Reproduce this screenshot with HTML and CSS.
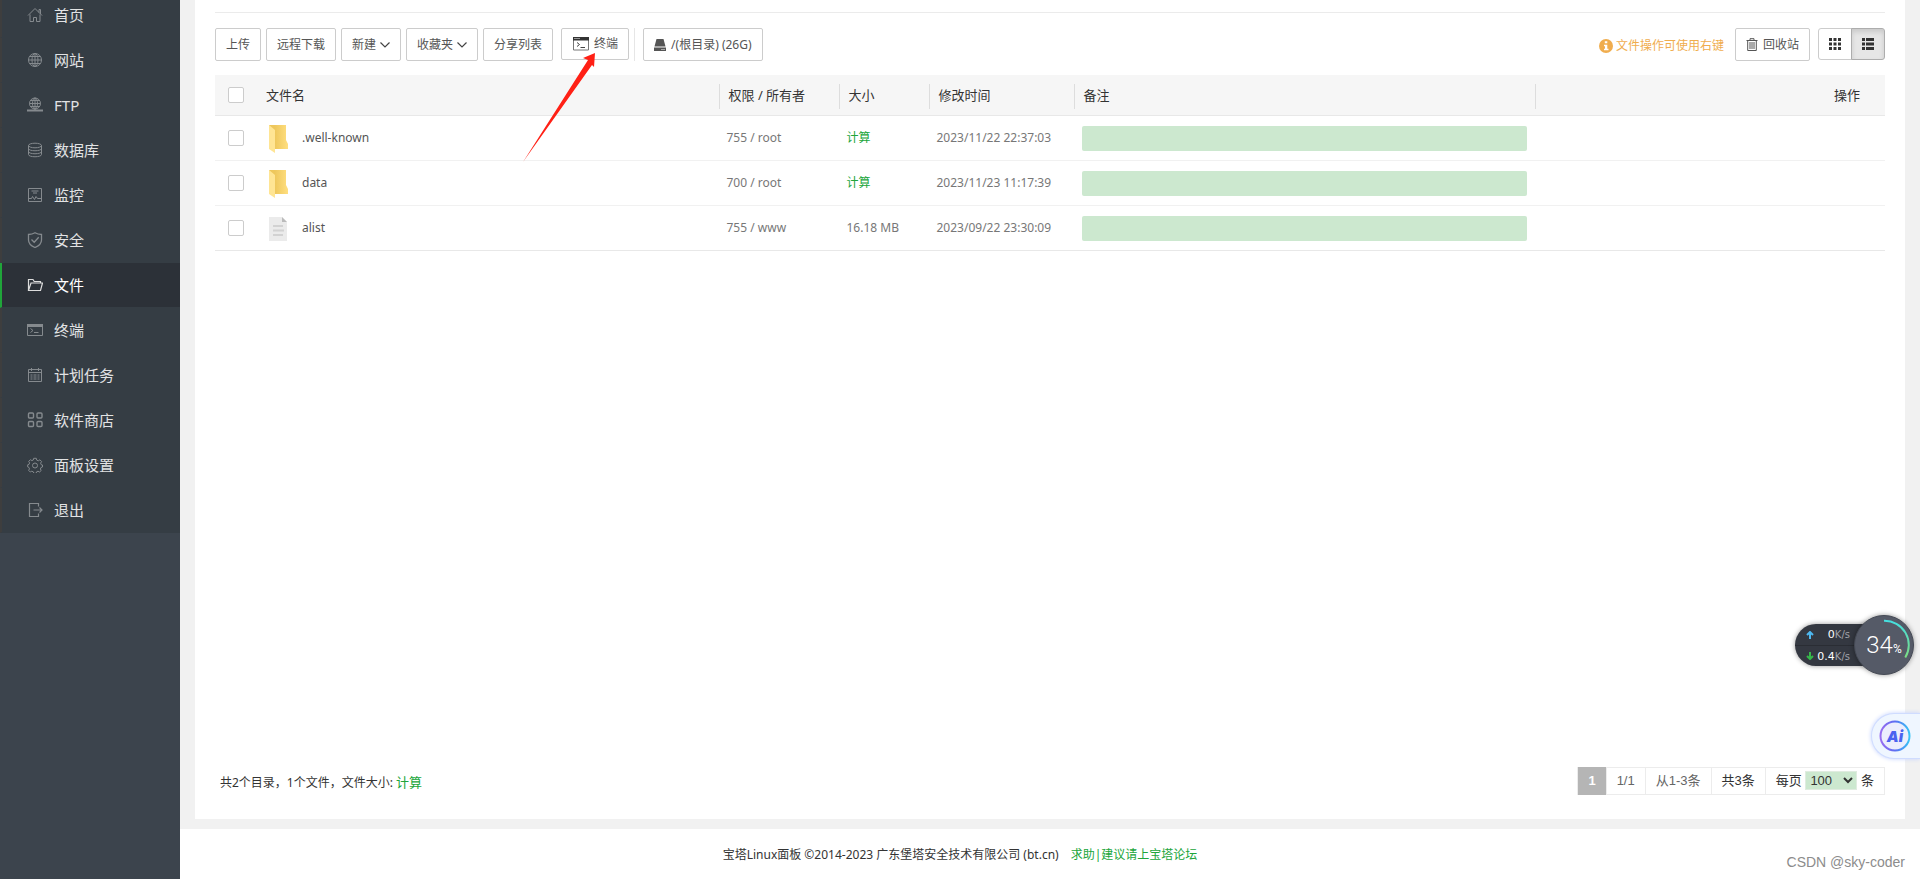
FILE: index.html
```html
<!DOCTYPE html>
<html lang="zh-CN">
<head>
<meta charset="utf-8">
<title>文件 - 宝塔Linux面板</title>
<link rel="stylesheet" href="styles.css">
</head>
<body>
<div class="page">
  <nav class="sidebar">
    <ul class="menu">
      <li><a href="#"><svg viewBox="0 0 16 16"><path d="M1 8.5 8 1.5l7 7M12 5.500V2.500h1.500v4.500M3 7.500v7h3.500v-4h3v4H13v-7"/></svg>首页</a></li>
      <li><a href="#"><svg viewBox="0 0 16 16"><circle cx="8" cy="8" r="6.500"/><ellipse cx="8" cy="8" rx="3" ry="6.500"/><path d="M8 1.500v13M1.500 8h13M2.500 4.500h11M2.500 11.500h11"/></svg>网站</a></li>
      <li><a href="#"><svg viewBox="0 0 16 16"><circle cx="8" cy="6.500" r="5.500"/><ellipse cx="8" cy="6.500" rx="2.500" ry="5.500"/><path d="M8 1v12M2.500 6.500h11M3.500 3.500h9M3.500 9.500h9"/><path d="M0 13.500h16M6 13.500h4" stroke-width="2"/></svg>FTP</a></li>
      <li><a href="#"><svg viewBox="0 0 16 16"><ellipse cx="8" cy="3.500" rx="6.500" ry="2.300"/><path d="M1.500 3.500v9c0 3 13 3 13 0v-9M1.500 6.500c0 3 13 3 13 0M1.500 9.500c0 3 13 3 13 0"/></svg>数据库</a></li>
      <li><a href="#"><svg viewBox="0 0 16 16"><path d="M1.500 1.500h13v13h-13zM4.500 4h7M6 6h4M1.500 11.500h3l1-2 2 3 1.500-3 1.500 2h4"/></svg>监控</a></li>
      <li><a href="#"><svg viewBox="0 0 16 16"><path d="M8 .8c2 1.200 4 1.700 6.500 1.700v5.500c0 3.500-2.500 5.800-6.500 7.500-4-1.700-6.500-4-6.500-7.500V2.500C4 2.500 6 2 8 .8zM4.500 7.500l2.700 2.700 4.500-5" stroke-width="1.300"/></svg>安全</a></li>
      <li class="active"><a href="#"><svg viewBox="0 0 16 16"><path d="M1.500 13V2.500h4.500l1.200 2h6.300V6M1.500 13.500 4 6h11.500l-2 7.500z" stroke-width="1.200"/></svg>文件</a></li>
      <li><a href="#"><svg viewBox="0 0 16 16"><path d="M.5 2.500h15v11H.5z"/><path d="M0 3.500h16" stroke-width="3"/><path d="m3.500 6.500 2.500 2-2.500 2M7 10.500h4.500"/></svg>终端</a></li>
      <li><a href="#"><svg viewBox="0 0 16 16"><path d="M1.500 2.500h13v12h-13zM1.500 5.500h13M4.500 1v3M11.500 1v3M3.500 8h2m1 0h3m1 0h2M3.500 10h2m1 0h3m1 0h2M3.500 12h2m1 0h3m1 0h2"/></svg>计划任务</a></li>
      <li><a href="#"><svg viewBox="0 0 16 16"><g stroke-width="1.400"><rect x="1.500" y="1" width="5" height="5" rx="1"/><rect x="10" y="1" width="5" height="5" rx="1"/><rect x="1.500" y="9.500" width="5" height="5" rx="1"/><rect x="10" y="9.500" width="5" height="5" rx="1"/></g></svg>软件商店</a></li>
      <li><a href="#"><svg viewBox="0 0 16 16"><path d="M6.700 1.300h2.600l.4 1.800 1.600.7 1.600-1 1.700 1.800-1 1.500.7 1.700 1.200.2v2l-1.500.5-.6 1.500.8 1.500-1.700 1.500-1.500-.8-1.400.6-.5 1.600H6.900l-.6-1.600-1.500-.6-1.500.8-1.700-1.700.9-1.400-.6-1.500-1.200-.5V7.800L2 7.400l.6-1.500-.9-1.500 1.700-1.700 1.500.9 1.400-.6z"/><circle cx="8" cy="8.500" r="2.500"/></svg>面板设置</a></li>
      <li><a href="#"><svg viewBox="0 0 16 16"><path d="M11.500 4.500v-3h-9v13h9v-3M6.500 8h8.500M12.500 5.500 15 8l-2.500 2.500" stroke-width="1.200"/></svg>退出</a></li>
    </ul>
  </nav>

  <div class="main">
    <main class="panel">
      <div class="toolbar">
        <button class="btn">上传</button>
        <button class="btn">远程下载</button>
        <button class="btn">新建<svg class="caret" viewBox="0 0 10 6"><path d="m.5.5 4.500 4.500L9.500.5"/></svg></button>
        <button class="btn">收藏夹<svg class="caret" viewBox="0 0 10 6"><path d="m.5.5 4.500 4.500L9.500.5"/></svg></button>
        <button class="btn">分享列表</button>
        <button class="btn terminal"><svg class="term-icon" viewBox="0 0 16 14"><path d="M.5 1.500h15v11.500H.5z" fill="none" stroke="#777"/><path d="M0 0h16v3.500H0z" fill="#333"/><path d="M1.500 1.500h1m1 0h1m1 0h1" stroke="#fff"/><path d="m4 5.500 2.500 2L4 9.500M7.500 10.500H12" fill="none" stroke="#444"/></svg>终端</button>
        <span class="split"></span>
        <button class="btn disk"><svg class="disk-icon" viewBox="0 0 12 12"><path d="M2.500 0h7l2 7.500h-11zM0 8.500h12V12H0z" fill="#555"/><path d="M7.500 10.500h1m1 0h1" stroke="#fff"/></svg>/(根目录) (26G)</button>
        <span class="hint"><svg class="info-icon" viewBox="0 0 14 14"><circle cx="7" cy="7" r="7" fill="#f0ad4e"/><path d="M5.800 2.300h2.500v2H5.800zM5 5.700h3.300v4H9.500v1.600H5V9.700h1V7.200H5z" fill="#fff"/></svg>文件操作可使用右键</span>
        <button class="btn recycle"><svg class="trash-icon" viewBox="0 0 12 14"><path d="M.5 2.500h11M4 2V.700h4V2M1.700 3v9.500h8.600V3M4 4v7M6 4v7M8 4v7" fill="none" stroke="#555"/></svg>回收站</button>
        <div class="views">
          <button aria-label="图标"><svg viewBox="0 0 12 12"><path d="M0 0h3v3H0zM4.500 0h3v3h-3zM9 0h3v3H9zM0 4.500h3v3H0zM4.500 4.500h3v3h-3zM9 4.500h3v3H9zM0 9h3v3H0zM4.500 9h3v3h-3zM9 9h3v3H9z"/></svg></button>
          <button class="on" aria-label="列表"><svg viewBox="0 0 12 12"><path d="M0 0h3v3H0zM4 0h8v3H4zM0 4.500h3v3H0zM4 4.500h8v3H4zM0 9h3v3H0zM4 9h8v3H4z"/></svg></button>
        </div>
      </div>

      <table class="files">
        <colgroup><col class="c-check"><col><col class="c-perm"><col class="c-size"><col class="c-time"><col><col class="c-act"></colgroup>
        <thead>
          <tr><th><input type="checkbox" aria-label="全选"></th><th>文件名</th><th class="line">权限 / 所有者</th><th class="line">大小</th><th class="line">修改时间</th><th class="line">备注</th><th class="line act">操作</th></tr>
        </thead>
        <tbody>
          <tr><td><input type="checkbox" aria-label="选择 .well-known"></td><td><div class="name"><svg class="folder" viewBox="0 0 20 29"><defs><linearGradient id="fold" x1="0" y1="0" x2="1" y2="0"><stop offset=".3" stop-color="#eec75c"/><stop offset="1" stop-color="#ffdf80"/></linearGradient></defs><path d="M1 1h17v15l2 4v5H6z" fill="url(#fold)"/><path d="M1 1 7 6v23l-6-4z" fill="#ffe594"/></svg>.well-known</div></td><td>755 / root</td><td><a href="#">计算</a></td><td>2023/11/22 22:37:03</td><td><input class="note" type="text" aria-label="备注"></td><td></td></tr>
          <tr><td><input type="checkbox" aria-label="选择 data"></td><td><div class="name"><svg class="folder" viewBox="0 0 20 29"><path d="M1 1h17v15l2 4v5H6z" fill="url(#fold)"/><path d="M1 1 7 6v23l-6-4z" fill="#ffe594"/></svg>data</div></td><td>700 / root</td><td><a href="#">计算</a></td><td>2023/11/23 11:17:39</td><td><input class="note" type="text" aria-label="备注"></td><td></td></tr>
          <tr><td><input type="checkbox" aria-label="选择 alist"></td><td><div class="name"><svg class="folder" viewBox="0 0 20 29"><path d="M1 3h13l5 5v19H1z" fill="#ebebeb"/><path d="M14 3l5 5h-5z" fill="#bbb"/><path d="M5 12h10M5 16.500h11M5 21h10" stroke="#d2d2d2" stroke-width="2"/></svg>alist</div></td><td>755 / www</td><td>16.18 MB</td><td>2023/09/22 23:30:09</td><td><input class="note" type="text" aria-label="备注"></td><td></td></tr>
        </tbody>
      </table>

      <div class="bottom">
        <div class="summary">共2个目录，1个文件，文件大小: <a href="#">计算</a></div>
        <div class="pager">
          <span class="current">1</span>
          <span class="grey">1/1</span>
          <span class="grey">从1-3条</span>
          <span>共3条</span>
          <label>每页 <select><option>100</option></select> 条</label>
        </div>
      </div>
    </main>
    <footer class="footer">
      <span>宝塔Linux面板 ©2014-2023 广东堡塔安全技术有限公司 (bt.cn)</span>
      <a href="#">求助|建议请上宝塔论坛</a>
    </footer>
  </div>
</div>

<svg class="arrow" viewBox="0 0 76 112"><path d="M74 1 62 6l5 2L2 110 71 13l2 2z" fill="#ff2015"/></svg>

<div class="monitor">
  <div class="speeds">
    <div><svg viewBox="0 0 8 8"><path d="M4 8V1M1 4l3-3 3 3" stroke="#4db8f0"/></svg><span>0<small>K/s</small></span></div>
    <div><svg viewBox="0 0 8 8"><path d="M4 0v7M1 4l3 3 3-3" stroke="#36b84a"/></svg><span>0.4<small>K/s</small></span></div>
  </div>
  <div class="gauge">
    <svg viewBox="0 0 60 60"><defs><linearGradient id="ring" x1="0" y1="0" x2="0" y2="1"><stop offset="0" stop-color="#45dfe0"/><stop offset="1" stop-color="#7ddc82"/></linearGradient></defs><path d="M30 5a25 25 0 0 1 22 38" fill="none" stroke="url(#ring)" stroke-width="2"/></svg>
    <span>34<small>%</small></span>
  </div>
</div>
<button class="ai"><svg viewBox="0 0 32 32" aria-hidden="true"><defs><linearGradient id="halo" x1="0" y1="0" x2="1" y2="0"><stop offset="0" stop-color="#9a6df0"/><stop offset=".5" stop-color="#5c6cf2"/><stop offset="1" stop-color="#38c4f5"/></linearGradient></defs><circle cx="16" cy="16" r="14.500" fill="#eceefd" stroke="url(#halo)" stroke-width="2"/></svg><span>Ai</span></button>
<div class="watermark">CSDN @sky-coder</div>
</body>
</html>
```
FILE: styles.css
```css
* { box-sizing: border-box; }
body { margin: 0; background: #f1f1f1; color: #333; font: 12px/18px "Noto Sans", "Noto Sans CJK SC", sans-serif; overflow: hidden; }
a { color: #20a53a; text-decoration: none; }
button, input, select { font: inherit; margin: 0; }

.page { display: flex; min-height: 100vh; }

.sidebar { width: 180px; flex: none; background: #3c444d; }
.menu { list-style: none; margin: -7px 0 0; padding: 0; background: #353d44; }
.menu li { height: 45px; border-left: 2px solid #3e3e3e; border-bottom: 1px solid #353d44; }
.menu a { display: flex; align-items: center; gap: 11px; height: 44px; padding-left: 25px; color: #e2e3e4; font-size: 15px; }
.menu svg { width: 16px; height: 16px; fill: none; stroke: #858a8e; }
.menu .active { background: #2c3138; border-left-color: #20a53a; }
.menu .active a { color: #fff; }
.menu .active svg { stroke: #ddd; }

.main { flex: 1; display: flex; flex-direction: column; min-width: 0; }
.panel { flex: 1; display: flex; flex-direction: column; margin: 0 15px 10px; padding: 12px 20px 24px; background: #fff; }

.toolbar { display: flex; align-items: flex-start; gap: 5px; border-top: 1px solid #ebebeb; padding: 15px 0 12px; }
.btn { display: flex; align-items: center; height: 33px; padding: 0 10px; border: 1px solid #ccc; border-radius: 2px; background: #fff; color: #555; white-space: nowrap; }
.caret { width: 10px; height: 6px; margin-left: 4px; fill: none; stroke: #444; stroke-width: 1.2; }
.terminal { height: 32px; margin-left: 3px; padding: 0 10px 0 11px; gap: 5px; }
.term-icon { width: 16px; height: 14px; }
.split { width: 1px; height: 33px; background: #e6e6e6; }
.disk { margin-left: 3px; gap: 5px; }
.disk-icon { width: 12px; height: 12px; }
.hint { display: flex; align-items: center; gap: 3px; height: 35px; margin-left: auto; margin-right: 6px; color: #f0ad4e; }
.info-icon { width: 14px; height: 14px; }
.recycle { gap: 5px; }
.trash-icon { width: 12px; height: 14px; }
.views { display: flex; margin-left: 3px; }
.views button { display: flex; align-items: center; justify-content: center; width: 34px; height: 32px; padding: 0; border: 1px solid #ccc; border-radius: 3px 0 0 3px; background: #fff; }
.views button.on { margin-left: -1px; border-color: #adadad; border-radius: 0 3px 3px 0; background: #e6e6e6; box-shadow: inset 0 3px 5px rgba(0, 0, 0, .125); }
.views svg { width: 12px; height: 12px; fill: #333; }

.files { width: 100%; table-layout: fixed; border-collapse: separate; border-spacing: 0; }
.c-check { width: 42px; }
.c-perm { width: 120px; }
.c-size { width: 90px; }
.c-time { width: 145px; }
.c-act { width: 350px; }
.files th { height: 41px; padding: 0 9px; background: #f6f6f6; border-bottom: 1px solid #e8e8e8; font-size: 13px; font-weight: normal; text-align: left; }
.files th.line { padding-left: 10px; background: linear-gradient(#ddd, #ddd) 0 9px / 1px 25px no-repeat #f6f6f6; }
.files th.act { padding-right: 25px; text-align: right; }
.files td { height: 45px; padding: 0 8px; border-bottom: 1px solid #f1f1f1; color: #777; }
.files tr:last-child td { border-bottom-color: #e8e8e8; }
.files th:first-child, .files td:first-child { padding: 0 0 0 13px; }
.files input[type=checkbox] { display: block; appearance: none; width: 16px; height: 16px; border: 1px solid #ccc; border-radius: 2px; background: #fff; }
.name { display: flex; align-items: center; gap: 14px; padding-left: 3px; color: #555; }
.folder { width: 20px; height: 29px; }
.note { display: block; width: 100%; height: 25px; border: 0; border-radius: 2px; background: #cce8cf; }

.bottom { display: flex; align-items: center; justify-content: space-between; margin-top: auto; padding-left: 5px; }
.summary { padding-top: 2px; }
.summary a { font-size: 13px; }
.pager { display: flex; height: 28px; border: 1px solid #ececec; font: 13px/26px "Liberation Sans", "Noto Sans CJK SC", sans-serif; white-space: nowrap; }
.pager > * { padding: 0 10px; border-left: 1px solid #ececec; }
.pager .grey { color: #666; }
.pager .current { margin: -1px 0; line-height: 28px; border: 0; background: #b5b5b5; color: #fff; font-weight: bold; }
.pager select { width: 52px; height: 19px; padding: 0; border: 1px solid #e0ece0; background: #cce8cf; color: #333; line-height: 17px; }

.footer { display: flex; align-items: center; justify-content: center; gap: 12px; height: 50px; padding: 2px 180px 0 0; background: #fff; }

.arrow { position: absolute; left: 521px; top: 52px; width: 76px; height: 112px; }

.monitor { position: absolute; right: 6px; top: 615px; display: flex; align-items: center; }
.speeds { width: 89px; margin-right: -30px; border-radius: 21px; background: #343841; box-shadow: 0 0 5px rgba(0, 0, 0, .4); color: #fff; }
.speeds div { display: flex; align-items: center; justify-content: space-between; height: 21px; padding: 0 34px 0 11px; font: 11px "DejaVu Sans", sans-serif; }
.speeds div + div { border-top: 1px solid #2a2d34; }
.speeds svg { width: 8px; height: 8px; fill: none; stroke-width: 2; }
.speeds small { color: #a0a3aa; font-size: 10px; }
.gauge { position: relative; display: flex; align-items: center; justify-content: center; width: 60px; height: 60px; border: 1px solid #454a55; border-radius: 50%; background: #555a67; box-shadow: 0 0 5px rgba(0, 0, 0, .4); color: #fff; font: 300 24px Roboto, sans-serif; }
.gauge svg { position: absolute; inset: 0; }
.gauge small { font-size: 12px; font-weight: 400; }

.ai { position: absolute; right: 0; top: 713px; display: flex; align-items: center; width: 49px; height: 46px; padding: 0 0 0 7px; border: 1px solid #cfdcff; border-right: 0; border-radius: 23px 0 0 23px; background: #eff6ff; box-shadow: 0 0 4px #c4d2ff; }
.ai svg { width: 32px; height: 32px; flex: none; }
.ai span { width: 32px; margin-left: -32px; color: #4a63f0; font: italic 900 15px Inter, sans-serif; text-align: center; }

.watermark { position: absolute; right: 15px; top: 853px; color: #8c8c8c; font: 14px/18px "Liberation Sans", sans-serif; }
```
